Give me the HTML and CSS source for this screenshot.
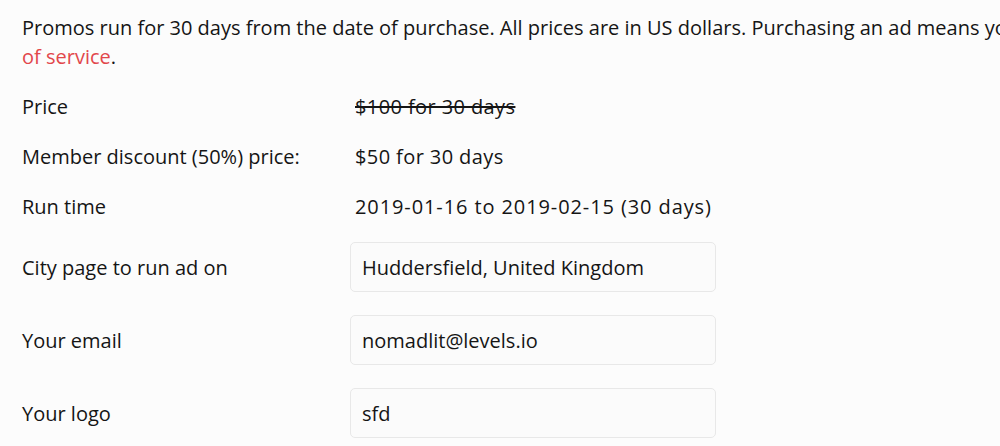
FILE: index.html
```html
<!DOCTYPE html>
<html>
<head>
<meta charset="utf-8">
<link rel="stylesheet" href="styles.css">
</head>
<body>
<div class="page">
  <p class="intro">Promos run for 30 days from the date of purchase. All prices are in US dollars. Purchasing an ad means you agree to the <a class="link" href="#">terms of service</a>.</p>
  <div class="info">
    <div class="row"><div class="label">Price</div><div class="value"><s>$100 for 30 days</s></div></div>
    <div class="row"><div class="label">Member discount (50%) price:</div><div class="value">$50 for 30 days</div></div>
    <div class="row"><div class="label">Run time</div><div class="value value-dates">2019-01-16 to 2019-02-15 (30 days)</div></div>
  </div>
  <div class="form">
    <div class="frow"><div class="label">City page to run ad on</div><div class="field">Huddersfield, United Kingdom</div></div>
    <div class="frow"><div class="label">Your email</div><div class="field">nomadlit@levels.io</div></div>
    <div class="frow"><div class="label">Your logo</div><div class="field">sfd</div></div>
  </div>
</div>
</body>
</html>
```
FILE: styles.css
```css
html, body {
  margin: 0;
  padding: 0;
  background: #fcfcfc;
}
body {
  font-family: "Open Sans", "Noto Sans", sans-serif;
  font-size: 20px;
  color: #151515;
  overflow: hidden;
}
.page {
  padding: 13px 0 0 22px;
  width: 1250px;
}
.intro {
  margin: 0;
  line-height: 29px;
  width: 1175px;
}
.link {
  color: #e2474b;
  text-decoration: none;
}
.info {
  margin-top: 10px;
}
.row {
  display: grid;
  grid-template-columns: 333px 1fr;
  height: 50px;
  align-items: center;
}
.value {
  letter-spacing: 0.4px;
}
.value-dates {
  letter-spacing: 0.9px;
}
.form {
  margin-top: 11px;
  display: grid;
  row-gap: 23px;
}
.frow {
  display: grid;
  grid-template-columns: 328px 366px;
  align-items: center;
}
.field {
  box-sizing: border-box;
  height: 50px;
  border: 1px solid #e8e8e8;
  border-radius: 5px;
  background: #fbfbfb;
  padding-left: 11px;
  display: flex;
  align-items: center;
}
```
